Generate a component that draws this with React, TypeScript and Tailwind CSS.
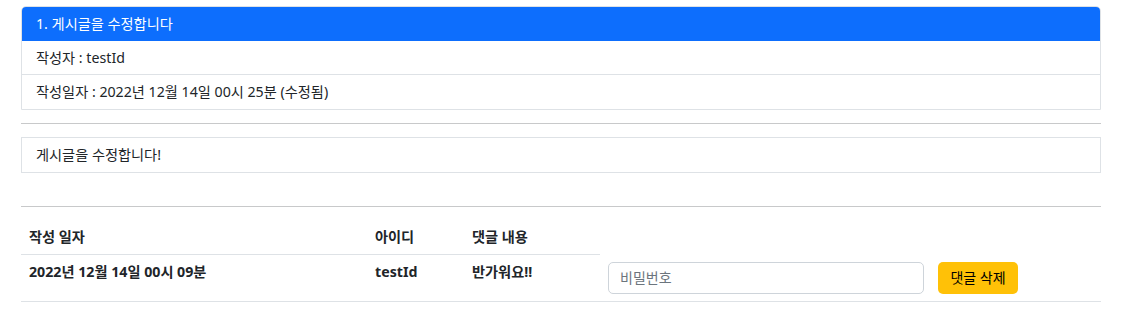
export default function App() {
  const font = { fontFamily: '"Noto Sans", "Noto Sans CJK KR", sans-serif' };
  return (
    <div className="bg-white min-h-[311px] pt-[6px] text-[14.2px] leading-[20px] text-[#212529]" style={font}>
      <div className="ml-[21px] w-[1080px]">
        {/* 게시글 카드 */}
        <div className="border border-[#dee2e6] rounded-t-[5px] overflow-hidden">
          <div className="h-[35px] bg-[#0d6efd] text-white px-[15px] flex items-center -mx-px -mt-px">
            1. 게시글을 수정합니다
          </div>
          <div className="h-[34px] px-[14px] flex items-center border-b border-[#dee2e6]">작성자 : testId</div>
          <div className="h-[34px] px-[14px] flex items-center">작성일자 : 2022년 12월 14일 00시 25분 (수정됨)</div>
        </div>

        <hr className="mt-[13px] mb-[13px] border-t border-[#c8c9ca]" />

        <div className="h-[36px] border border-[#dee2e6] px-[14px] flex items-center">게시글을 수정합니다!</div>

        <hr className="mt-[33px] mb-[13px] border-t border-[#c8c9ca]" />

        {/* 댓글 목록 */}
        <table className="w-full border-collapse">
          <thead>
            <tr className="text-left">
              <th className="w-[346px] px-[8px] py-[7px] border-b border-[#dee2e6] font-bold">작성 일자</th>
              <th className="w-[97px] px-[8px] py-[7px] border-b border-[#dee2e6] font-bold">아이디</th>
              <th className="w-[136px] px-[8px] py-[7px] border-b border-[#dee2e6] font-bold">댓글 내용</th>
            </tr>
          </thead>
          <tbody>
            <tr className="font-bold">
              <td className="align-top px-[8px] py-[7px] border-b border-[#dee2e6]">2022년 12월 14일 00시 09분</td>
              <td className="align-top px-[8px] py-[7px] border-b border-[#dee2e6]">testId</td>
              <td className="align-top px-[8px] py-[7px] border-b border-[#dee2e6]">반가워요!!</td>
              <td className="w-[332px] align-top px-[8px] py-[7px] border-b border-[#dee2e6]">
                <input
                  type="password"
                  placeholder="비밀번호"
                  className="block w-[316px] h-[32px] px-[11px] border border-[#ced4da] rounded-[5px] font-normal text-[14px] placeholder-[#6c757d] focus:outline-none"
                  style={font}
                />
              </td>
              <td className="align-top pl-[6px] py-[7px] border-b border-[#dee2e6]">
                <button className="block w-[80px] h-[32px] bg-[#ffc107] rounded-[5px] text-black font-normal text-[14px]">
                  댓글 삭제
                </button>
              </td>
            </tr>
          </tbody>
        </table>
      </div>
    </div>
  );
}
